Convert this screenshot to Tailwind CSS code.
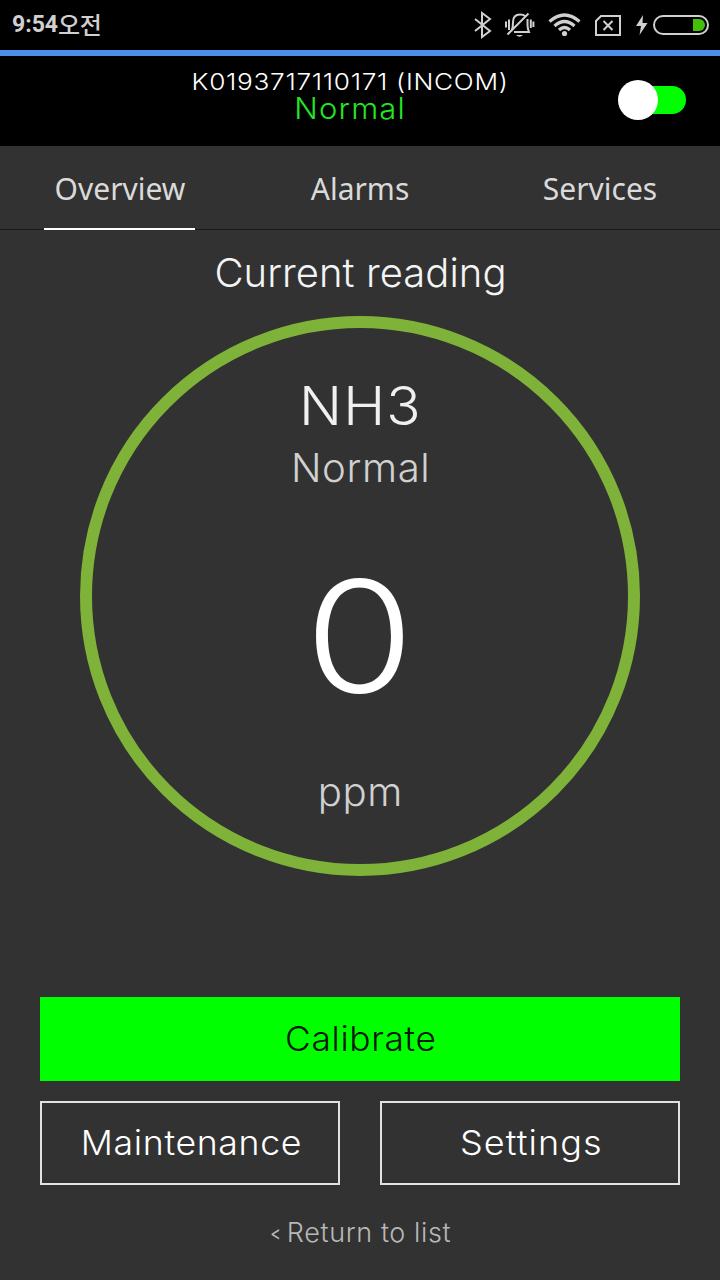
<!DOCTYPE html>
<html lang="ko">
<head>
<meta charset="utf-8">
<title>Overview</title>
<script src="https://cdn.jsdelivr.net/npm/@tailwindcss/browser@4"></script>
</head>
<body class="w-[720px] h-[1280px] overflow-hidden bg-[#323232] flex flex-col font-['Inter','Noto_Sans_CJK_KR',sans-serif] font-[260] whitespace-nowrap">
  <div class="h-[50px] shrink-0 bg-black flex items-center justify-between pl-3 pr-[11px] text-[#d0d0d0]">
    <span class="font-[Roboto,'Noto_Sans_CJK_KR',sans-serif] font-bold text-[23px] leading-[50px] flex">9:54<span class="font-medium text-[24px] tracking-[-0.5px] pt-px">오전</span></span>
    <svg class="w-[240px] h-[50px]" viewBox="469 0 240 50" fill="none" stroke="currentColor" stroke-width="2">
      <path d="M475 19L490 31L482 37V13L490 19L475 31"/>
      <path d="M511.500 31C513 28 513 26 513 22C513 17 516 14.500 520 14.500C522 14.500 524 15 525 16M527.500 19V25C527.500 28 528 29.500 529 32H514M507.500 34.500L528.500 13.500M509 19.500V30M506 21.500V27.500M530.800 19.500V28M533.400 21.500V27"/>
      <path d="M516 35H523Q519.500 38.500 516 35Z" fill="currentColor" stroke="none"/>
      <path d="M549.500 21.500Q564.500 8.500 579.500 21.500M554.500 26Q564.500 17 574.500 26M559 30Q564.500 25 570 30" stroke-width="3.200"/>
      <circle cx="564.500" cy="33.500" r="2.600" fill="currentColor" stroke="none"/>
      <path d="M601 16H620V35H596V21ZM603.500 21L612.500 30M612.500 21L603.500 30"/>
      <path d="M643 15L636 26H641L639.500 35L647.500 23H642.500Z" fill="currentColor" stroke="none"/>
      <rect x="654" y="16" width="54" height="18" rx="9"/>
      <path d="M693 19H699A6 6 0 0 1 699 31H693Z" fill="#45c00a" stroke="none"/>
    </svg>
  </div>
  <div class="h-1.5 shrink-0 bg-[#4a90e8]"></div>
  <header class="h-[90px] shrink-0 bg-black text-white grid grid-cols-[82px_1fr_102px]">
    <div></div>
    <div class="h-[90px] pt-[13px] flex flex-col items-center">
      <span class="text-[23px] leading-[26px] tracking-[0.6px] scale-x-114">K0193717110171 (INCOM)</span>
      <span class="text-[29.5px] leading-[26px] tracking-[1.1px] scale-x-105 pl-px text-[#22e822]">Normal</span>
    </div>
    <div class="flex items-center h-[88px]">
      <div class="size-10 rounded-full bg-white z-10"></div>
      <div class="w-12 h-7 -ml-5 rounded-r-full bg-[#00ff00]"></div>
    </div>
  </header>
  <nav class="h-[84px] shrink-0 border-b border-[#191915] grid grid-cols-3 justify-items-center font-['Noto_Sans',sans-serif] font-normal text-[30px] text-[#dadada] leading-[86px]">
    <span class="h-[84px] w-[151px] mr-px pl-px text-center border-b-2 border-white">Overview</span>
    <span>Alarms</span>
    <span>Services</span>
  </nav>
  <main class="flex flex-col items-center">
    <h1 class="mt-5 text-[40px] leading-[46px] pl-px tracking-[0.05px] text-[#f4f4f4]">Current reading</h1>
    <section class="mt-5 size-[560px] rounded-full border-12 border-[#7fb238] flex flex-col items-center text-[#d0d0d0]">
      <span class="mt-[46px] text-[54px] leading-[64px] tracking-[1px] pl-px scale-x-105 text-[#f0f0f0]">NH3</span>
      <span class="mt-[6px] text-[39px] leading-[48px] tracking-[0.6px] pl-0.5 scale-x-103">Normal</span>
      <span class="mt-[54px] text-[154px] leading-[180px] scale-x-115 text-white">0</span>
      <span class="mt-[42px] text-[39px] leading-[48px] tracking-[0.5px] scale-x-103">ppm</span>
    </section>
    <div class="mt-[121px] w-[640px] grid grid-cols-2 gap-x-10 gap-y-5 text-[34px] text-white">
      <button class="col-span-2 h-21 pb-0.5 bg-[#00ff00] text-[#0a1a0a] tracking-[0.6px]"><span class="inline-block scale-x-104 pl-px">Calibrate</span></button>
      <button class="h-21 pb-0.5 border-2 border-[#e2e2e2] tracking-[0.6px]"><span class="inline-block scale-x-105 pl-0.5">Maintenance</span></button>
      <button class="h-21 pb-0.5 border-2 border-[#e2e2e2] tracking-[1px]"><span class="inline-block scale-x-106 pl-0.5">Settings</span></button>
    </div>
    <div class="mt-7 flex items-center gap-[6px] text-[27px] leading-[40px] tracking-[0.6px] text-[#b8b8b8]"><span class="w-3 text-center text-[20px] font-normal leading-[40px] tracking-normal scale-x-80">&lt;</span><span>Return to list</span></div>
  </main>
</body>
</html>
